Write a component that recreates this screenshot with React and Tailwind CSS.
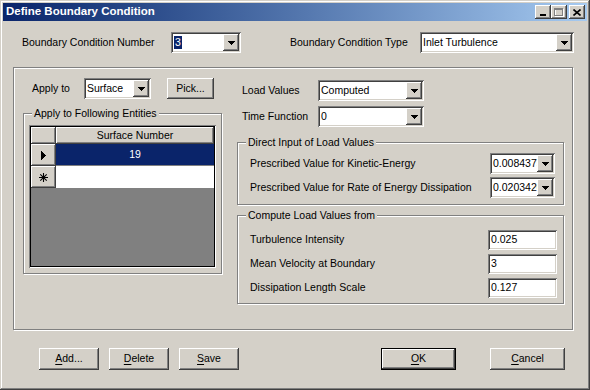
import React from "react";

const SUNKEN =
  "shadow-[inset_1px_1px_#808080,inset_-1px_-1px_#ffffff,inset_2px_2px_#404040,inset_-2px_-2px_#d4d0c8]";
const RAISED =
  "shadow-[inset_-1px_-1px_#404040,inset_1px_1px_#ffffff,inset_-2px_-2px_#808080,inset_2px_2px_#d4d0c8]";
const ETCHED = "border border-[#808080] shadow-[inset_1px_1px_#ffffff,1px_1px_#ffffff]";

function Arrow() {
  return (
    <div className={`w-[16px] h-full bg-[#d4d0c8] shrink-0 flex items-center justify-center ${RAISED}`}>
      <svg width="7" height="4" viewBox="0 0 7 4" shapeRendering="crispEdges">
        <rect x="0" y="0" width="7" height="1" fill="#000" />
        <rect x="1" y="1" width="5" height="1" fill="#000" />
        <rect x="2" y="2" width="3" height="1" fill="#000" />
        <rect x="3" y="3" width="1" height="1" fill="#000" />
      </svg>
    </div>
  );
}

function Combo({ className, children }) {
  return (
    <div className={`flex bg-white p-[2px] shrink-0 ${SUNKEN} ${className}`}>
      <div className="flex-1 flex items-center pl-[1px] overflow-hidden whitespace-nowrap">{children}</div>
      <Arrow />
    </div>
  );
}

function TextBox({ children }) {
  return (
    <div className={`w-[69px] h-[20px] bg-white p-[2px] pl-[3px] flex items-center shrink-0 ${SUNKEN}`}>
      {children}
    </div>
  );
}

function Button({ className, children }) {
  return (
    <div className={`bg-[#d4d0c8] flex items-center justify-center shrink-0 ${RAISED} ${className}`}>
      {children}
    </div>
  );
}

function Legend({ children }) {
  return (
    <div className="-mt-[7px] ml-[8px] px-[2px] self-start bg-[#d4d0c8] leading-[13px] h-[13px]">
      {children}
    </div>
  );
}

function U({ children }) {
  return <span className="underline underline-offset-[2px]">{children}</span>;
}

function TitleButton({ children }) {
  return (
    <div className={`w-[16px] h-[14px] bg-[#d4d0c8] flex items-center justify-center ${RAISED}`}>
      {children}
    </div>
  );
}

export default function App() {
  return (
    <div
      className={`w-[590px] h-[390px] bg-[#d4d0c8] p-[3px] flex flex-col text-[10.5px] text-black font-['Liberation_Sans',Arial,sans-serif] shadow-[inset_-1px_-1px_#404040,inset_1px_1px_#d4d0c8,inset_-2px_-2px_#808080,inset_2px_2px_#ffffff] overflow-hidden`}
    >
      {/* Title bar */}
      <div className="h-[18px] bg-gradient-to-r from-[#0a246a] to-[#a6caf0] flex items-center pl-[3px] pr-[2px]">
        <div className="flex-1 text-white font-bold text-[11.5px] leading-none">Define Boundary Condition</div>
        <div className="flex items-center">
          <TitleButton>
            <svg width="8" height="8" viewBox="0 0 8 8" shapeRendering="crispEdges">
              <rect x="1" y="6" width="6" height="2" fill="#000" />
            </svg>
          </TitleButton>
          <TitleButton>
            <svg width="10" height="9" viewBox="0 0 10 9" shapeRendering="crispEdges">
              <rect x="1.5" y="1.5" width="8" height="7" fill="none" stroke="#ffffff" />
              <rect x="0.5" y="0.5" width="8" height="7" fill="none" stroke="#808080" />
              <rect x="0" y="1" width="9" height="1" fill="#808080" />
            </svg>
          </TitleButton>
          <div className="ml-[2px]">
            <TitleButton>
              <svg width="8" height="7" viewBox="0 0 8 7">
                <path d="M0.5 0.5 L7.5 6.5 M7.5 0.5 L0.5 6.5" stroke="#000" strokeWidth="1.6" />
              </svg>
            </TitleButton>
          </div>
        </div>
      </div>

      {/* Row 1 */}
      <div className="mt-[11px] h-[21px] flex items-center">
        <div className="ml-[19px] w-[149px]">Boundary Condition Number</div>
        <Combo className="w-[70px] h-[21px]">
          <span className="bg-[#0a246a] text-white px-[1px] leading-[13px]">3</span>
        </Combo>
        <div className="ml-[49px] w-[130px]">Boundary Condition Type</div>
        <Combo className="w-[154px] h-[21px]">Inlet Turbulence</Combo>
      </div>

      {/* Main panel */}
      <div className={`mt-[14px] ml-[10px] w-[560px] h-[263px] flex ${ETCHED}`}>
        {/* Left column */}
        <div className="ml-[9px] w-[199px] flex flex-col">
          <div className="mt-[10px] h-[21px] flex items-center">
            <div className="pl-[9px] w-[61px]">Apply to</div>
            <Combo className="w-[67px] h-[21px]">Surface</Combo>
            <Button className="ml-[16px] w-[47px] h-[21px]">Pick...</Button>
          </div>
          <div className={`mt-[14px] h-[161px] flex flex-col ${ETCHED}`}>
            <Legend>Apply to Following Entities</Legend>
            <div className="ml-[5px] mt-[5px] w-[187px] h-[143px] bg-[#808080] p-[2px] flex flex-col shadow-[inset_1px_1px_#808080,inset_-1px_-1px_#ffffff,inset_2px_2px_#000000,inset_-2px_-2px_#000000]">
              <div className="h-[17px] flex">
                <div className={`w-[25px] h-full bg-[#d4d0c8] ${RAISED}`} />
                <div className={`flex-1 h-full bg-[#d4d0c8] flex items-center justify-center ${RAISED}`}>
                  Surface Number
                </div>
              </div>
              <div className="h-[22px] flex">
                <div className={`w-[25px] h-full bg-[#d4d0c8] flex items-center justify-center ${RAISED}`}>
                  <svg width="5" height="9" viewBox="0 0 5 9" shapeRendering="crispEdges">
                    <path d="M0 0 L5 4.5 L0 9 Z" fill="#000" />
                  </svg>
                </div>
                <div className="flex-1 h-full bg-[#0a246a] text-white flex items-center justify-center border-b border-[#808080]">
                  19
                </div>
              </div>
              <div className="h-[22px] flex">
                <div className={`w-[25px] h-full bg-[#d4d0c8] flex items-center justify-center ${RAISED}`}>
                  <svg width="9" height="9" viewBox="0 0 9 9">
                    <path d="M4.5 0 V9 M0 4.5 H9 M1.3 1.3 L7.7 7.7 M7.7 1.3 L1.3 7.7" stroke="#000" strokeWidth="1.1" />
                  </svg>
                </div>
                <div className="flex-1 h-full bg-white" />
              </div>
            </div>
          </div>
        </div>

        {/* Right column */}
        <div className="ml-[15px] w-[327px] flex flex-col">
          <div className="mt-[12px] h-[21px] flex items-center">
            <div className="pl-[5px] w-[81px]">Load Values</div>
            <Combo className="w-[106px] h-[21px]">Computed</Combo>
          </div>
          <div className="mt-[5px] h-[21px] flex items-center">
            <div className="pl-[5px] w-[81px]">Time Function</div>
            <Combo className="w-[106px] h-[21px]">0</Combo>
          </div>

          <div className={`mt-[15px] h-[63px] flex flex-col ${ETCHED}`}>
            <Legend>Direct Input of Load Values</Legend>
            <div className="mt-[4px] h-[21px] flex items-center justify-between pl-[12px] pr-[8px]">
              <div>Prescribed Value for Kinetic-Energy</div>
              <Combo className="w-[65px] h-[21px]">0.0084375</Combo>
            </div>
            <div className="mt-[3px] h-[21px] flex items-center justify-between pl-[12px] pr-[8px]">
              <div>Prescribed Value for Rate of Energy Dissipation</div>
              <Combo className="w-[65px] h-[21px]">0.0203420</Combo>
            </div>
          </div>

          <div className={`mt-[10px] h-[89px] flex flex-col ${ETCHED}`}>
            <Legend>Compute Load Values from</Legend>
            <div className="mt-[8px] flex flex-col gap-[4px] pl-[12px] pr-[6px]">
              <div className="h-[20px] flex items-center justify-between">
                <div>Turbulence Intensity</div>
                <TextBox>0.025</TextBox>
              </div>
              <div className="h-[20px] flex items-center justify-between">
                <div>Mean Velocity at Boundary</div>
                <TextBox>3</TextBox>
              </div>
              <div className="h-[20px] flex items-center justify-between">
                <div>Dissipation Length Scale</div>
                <TextBox>0.127</TextBox>
              </div>
            </div>
          </div>
        </div>
      </div>

      {/* Bottom buttons */}
      <div className="mt-[18px] h-[22px] flex">
        <Button className="ml-[36px] w-[60px] h-[22px]">
          <U>A</U>dd...
        </Button>
        <Button className="ml-[10px] w-[60px] h-[22px]">
          <U>D</U>elete
        </Button>
        <Button className="ml-[10px] w-[60px] h-[22px]">
          <U>S</U>ave
        </Button>
        <div className="ml-[142px] w-[75px] h-[22px] border border-black flex">
          <Button className="flex-1 h-full">
            <U>O</U>K
          </Button>
        </div>
        <Button className="ml-[34px] w-[75px] h-[22px]">
          <U>C</U>ancel
        </Button>
      </div>
    </div>
  );
}
